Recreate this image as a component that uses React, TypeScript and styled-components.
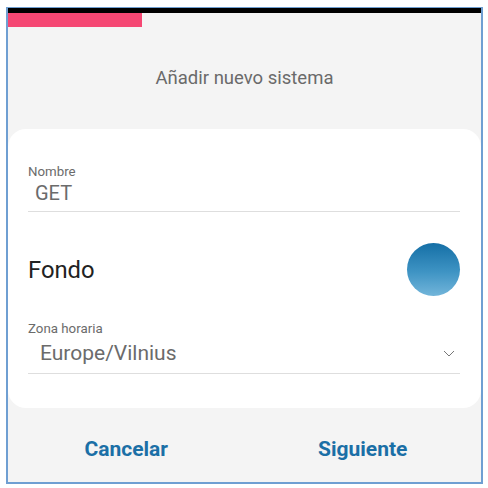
import React from "react";
import styled, { createGlobalStyle } from "styled-components";

const Global = createGlobalStyle`
  html, body { margin: 0; padding: 0; background: #ffffff; }
  body { font-family: Roboto, "Noto Sans", Arial, sans-serif; }
  * { box-sizing: border-box; }
`;

const Page = styled.div`
  padding: 7px 0 0 6px;
`;

const Frame = styled.div`
  width: 477px;
  height: 477px;
  border: 2px solid #6f9fd2;
  border-top-width: 1px;
  background: #f4f4f4;
  display: flex;
  flex-direction: column;
`;

const TopBar = styled.div`
  height: 5px;
  background: #000000;
`;

const Progress = styled.div`
  height: 14px;
  background: #f54773;
`;

const Header = styled.div`
  height: 102px;
  display: flex;
  align-items: center;
  justify-content: center;
  font-size: 18.5px;
  color: #6a6a6a;
`;

const Card = styled.div`
  background: #ffffff;
  border-radius: 18px;
  padding: 35px 21px 34px 20px;
  display: flex;
  flex-direction: column;
`;

const Label = styled.div`
  font-size: 13.3px;
  line-height: 16px;
  color: #6b6b6b;
`;

const Input = styled.div<{ $indent: number; $size: number; $lh: number; $mt: number }>`
  margin-top: ${(p) => p.$mt}px;
  padding: 0 5px 0 ${(p) => p.$indent}px;
  font-size: ${(p) => p.$size}px;
  line-height: ${(p) => p.$lh}px;
  color: #6b6b6b;
  border-bottom: 1px solid #dedede;
  display: flex;
  align-items: center;
  justify-content: space-between;
`;

const InputText = styled.span<{ $pb: number }>`
  padding-bottom: ${(p) => p.$pb}px;
`;

const Chevron = styled.svg`
  margin-top: -8px;
`;

const ColorRow = styled.div`
  margin-top: 31px;
  margin-bottom: 25px;
  height: 53px;
  display: flex;
  align-items: center;
  justify-content: space-between;
`;

const RowTitle = styled.div`
  font-size: 23.8px;
  color: #222222;
`;

const Swatch = styled.div`
  width: 53px;
  height: 53px;
  border-radius: 50%;
  background: linear-gradient(180deg, #156fa6 0%, #3f94c4 55%, #72b5da 100%);
`;

const Footer = styled.div`
  flex: 1;
  display: flex;
  padding-top: 30px;
`;

const Action = styled.button`
  flex: 1;
  border: none;
  background: transparent;
  font-family: inherit;
  font-size: 21px;
  line-height: 22px;
  font-weight: 700;
  color: #1b6fa6;
  height: 22px;
  padding: 0;
  cursor: pointer;
`;

export default function App() {
  return (
    <>
      <Global />
      <Page>
        <Frame>
          <TopBar />
          <Progress style={{ width: `${(134 / 473) * 100}%` }} />
          <Header>Añadir nuevo sistema</Header>
          <Card>
            <Label>Nombre</Label>
            <Input $indent={7} $size={20} $lh={22} $mt={2}>
              <InputText $pb={7}>GET</InputText>
            </Input>
            <ColorRow>
              <RowTitle>Fondo</RowTitle>
              <Swatch />
            </ColorRow>
            <Label>Zona horaria</Label>
            <Input $indent={12} $size={21} $lh={24} $mt={4}>
              <InputText $pb={8}>Europe/Vilnius</InputText>
              <Chevron width="12" height="7" viewBox="0 0 12 7">
                <polyline points="1,1 6,6 11,1" fill="none" stroke="#777" strokeWidth="1" />
              </Chevron>
            </Input>
          </Card>
          <Footer>
            <Action>Cancelar</Action>
            <Action>Siguiente</Action>
          </Footer>
        </Frame>
      </Page>
    </>
  );
}
